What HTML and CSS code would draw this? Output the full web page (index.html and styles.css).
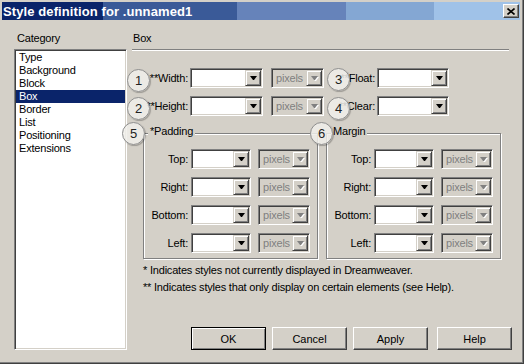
FILE: index.html
```html
<!DOCTYPE html>
<html lang="en">
<head>
    <meta charset="UTF-8">
    <title>Style definition for .unnamed1</title>
    <link rel="stylesheet" href="styles.css">
</head>
<body>
    <div class="window">
        <div class="titlebar">
            <span class="title">Style definition for .unnamed1</span>
            <span class="close">
                <svg width="8" height="7" viewBox="0 0 8 7"><path d="M0.5 0.5 L7.5 6.5 M7.5 0.5 L0.5 6.5" stroke="#000" stroke-width="1.6" fill="none"/></svg>
            </span>
        </div>
        <div class="dialog">
            <div class="cat-col">
                <div class="label cat-label">Category</div>
                <ul class="listbox">
                    <li>Type</li>
                    <li>Background</li>
                    <li>Block</li>
                    <li class="selected">Box</li>
                    <li>Border</li>
                    <li>List</li>
                    <li>Positioning</li>
                    <li>Extensions</li>
                </ul>
            </div>
            <div class="main-col">
                <div class="label box-label">Box</div>
                <div class="separator"></div>
                <div class="size-rows">
                    <div class="form-row">
                        <span class="field-label lbl-size">**Width:</span>
                        <span class="combo w73"><span class="combo-field"></span><span class="combo-btn"></span></span>
                        <span class="combo unit off"><span class="combo-field">pixels</span><span class="combo-btn"></span></span>
                        <span class="field-label lbl-side">**Float:</span>
                        <span class="combo w72"><span class="combo-field"></span><span class="combo-btn"></span></span>
                    </div>
                    <div class="form-row">
                        <span class="field-label lbl-size">**Height:</span>
                        <span class="combo w73"><span class="combo-field"></span><span class="combo-btn"></span></span>
                        <span class="combo unit off"><span class="combo-field">pixels</span><span class="combo-btn"></span></span>
                        <span class="field-label lbl-side">**Clear:</span>
                        <span class="combo w72"><span class="combo-field"></span><span class="combo-btn"></span></span>
                    </div>
                </div>
                <div class="groups">
                    <div class="group">
                        <div class="group-title">*Padding</div>
                        <div class="group-rows">
                            <div class="form-row">
                                <span class="field-label lbl-side-box">Top:</span>
                                <span class="combo w60"><span class="combo-field"></span><span class="combo-btn"></span></span>
                                <span class="combo unit off"><span class="combo-field">pixels</span><span class="combo-btn"></span></span>
                            </div>
                            <div class="form-row">
                                <span class="field-label lbl-side-box">Right:</span>
                                <span class="combo w60"><span class="combo-field"></span><span class="combo-btn"></span></span>
                                <span class="combo unit off"><span class="combo-field">pixels</span><span class="combo-btn"></span></span>
                            </div>
                            <div class="form-row">
                                <span class="field-label lbl-side-box">Bottom:</span>
                                <span class="combo w60"><span class="combo-field"></span><span class="combo-btn"></span></span>
                                <span class="combo unit off"><span class="combo-field">pixels</span><span class="combo-btn"></span></span>
                            </div>
                            <div class="form-row">
                                <span class="field-label lbl-side-box">Left:</span>
                                <span class="combo w60"><span class="combo-field"></span><span class="combo-btn"></span></span>
                                <span class="combo unit off"><span class="combo-field">pixels</span><span class="combo-btn"></span></span>
                            </div>
                        </div>
                    </div>
                    <div class="group">
                        <div class="group-title">Margin</div>
                        <div class="group-rows">
                            <div class="form-row">
                                <span class="field-label lbl-side-box">Top:</span>
                                <span class="combo w60"><span class="combo-field"></span><span class="combo-btn"></span></span>
                                <span class="combo unit off"><span class="combo-field">pixels</span><span class="combo-btn"></span></span>
                            </div>
                            <div class="form-row">
                                <span class="field-label lbl-side-box">Right:</span>
                                <span class="combo w60"><span class="combo-field"></span><span class="combo-btn"></span></span>
                                <span class="combo unit off"><span class="combo-field">pixels</span><span class="combo-btn"></span></span>
                            </div>
                            <div class="form-row">
                                <span class="field-label lbl-side-box">Bottom:</span>
                                <span class="combo w60"><span class="combo-field"></span><span class="combo-btn"></span></span>
                                <span class="combo unit off"><span class="combo-field">pixels</span><span class="combo-btn"></span></span>
                            </div>
                            <div class="form-row">
                                <span class="field-label lbl-side-box">Left:</span>
                                <span class="combo w60"><span class="combo-field"></span><span class="combo-btn"></span></span>
                                <span class="combo unit off"><span class="combo-field">pixels</span><span class="combo-btn"></span></span>
                            </div>
                        </div>
                    </div>
                </div>
                <div class="notes">
                    <p>* Indicates styles not currently displayed in Dreamweaver.</p>
                    <p>** Indicates styles that only display on certain elements (see Help).</p>
                </div>
                <div class="buttons">
                    <button class="btn btn-default">OK</button>
                    <button class="btn">Cancel</button>
                    <button class="btn">Apply</button>
                    <button class="btn btn-help">Help</button>
                </div>
            </div>
        </div>
        <span class="mark mark-1">1</span>
        <span class="mark mark-2">2</span>
        <span class="mark mark-3">3</span>
        <span class="mark mark-4">4</span>
        <span class="mark mark-5">5</span>
        <span class="mark mark-6">6</span>
    </div>
</body>
</html>
```

FILE: styles.css
```css
body {
    margin: 0;
    background: #d4d0c8;
    font-family: 'Liberation Sans', Arial, sans-serif;
    font-size: 11px;
    letter-spacing: -0.2px;
    color: #000;
}
.window {
    position: relative;
    width: 524px;
    height: 364px;
    box-sizing: border-box;
    padding: 2px 4px 2px 2px;
    background: #d4d0c8;
    display: flex;
    flex-direction: column;
    box-shadow: inset -1px -1px #404040, inset -2px -2px #808080;
}
.titlebar {
    height: 18px;
    flex-shrink: 0;
    display: flex;
    align-items: center;
    justify-content: space-between;
    padding: 0 1px;
    background: linear-gradient(to right,
        #0a246a 0, #0a246a 101px,
        #3a5a98 101px, #3a5a98 235px,
        #6683ba 235px, #6683ba 344px,
        #84a7d3 344px, #84a7d3 432px,
        #a0c2e8 432px);
}
.title {
    color: #fff;
    font-weight: bold;
    font-size: 13px;
    letter-spacing: 0.1px;
    white-space: nowrap;
}
.close {
    width: 16px;
    height: 14px;
    box-sizing: border-box;
    background: #d4d0c8;
    border: 1px solid;
    border-color: #fff #404040 #404040 #fff;
    box-shadow: inset -1px -1px #808080;
    display: flex;
    align-items: center;
    justify-content: center;
}
.close svg {
    display: block;
}
.dialog {
    flex: 1;
    min-height: 0;
    display: flex;
    gap: 5px;
    padding: 12px 8px 12px 12px;
}
.label {
    line-height: 13px;
}
.cat-col {
    width: 113px;
    display: flex;
    flex-direction: column;
}
.cat-label {
    padding-left: 3px;
    margin-bottom: 4px;
}
.listbox {
    flex: 1;
    margin: 0;
    padding: 1px;
    list-style: none;
    background: #fff;
    border: 1px solid;
    border-color: #808080 #fff #fff #808080;
    box-shadow: inset 1px 1px #404040, inset -1px -1px #d4d0c8;
}
.listbox li {
    line-height: 13px;
    padding-left: 3px;
    white-space: nowrap;
}
.listbox li.selected {
    background: #0a246a;
    color: #fff;
}
.main-col {
    flex: 1;
    min-width: 0;
    display: flex;
    flex-direction: column;
}
.box-label {
    padding-left: 1px;
    margin-bottom: 4px;
}
.separator {
    border-top: 1px solid #808080;
    border-bottom: 1px solid #fff;
    margin-right: 3px;
}
.size-rows {
    margin-top: 17px;
    display: flex;
    flex-direction: column;
    gap: 8px;
}
.form-row {
    display: flex;
    align-items: center;
    height: 20px;
}
.field-label {
    line-height: 20px;
    text-align: right;
    white-space: nowrap;
    margin-right: 2px;
    flex-shrink: 0;
}
.lbl-size {
    width: 56px;
}
.lbl-side {
    width: 51px;
}
.lbl-side-box {
    width: 44px;
    margin-right: 3px;
}
.combo {
    height: 20px;
    box-sizing: border-box;
    flex-shrink: 0;
    display: flex;
    padding: 1px;
    background: #fff;
    border: 1px solid;
    border-color: #808080 #fff #fff #808080;
    box-shadow: inset 1px 1px #404040, inset -1px -1px #d4d0c8;
}
.combo-field {
    flex: 1;
    line-height: 16px;
    padding-left: 3px;
    overflow: hidden;
}
.combo-btn {
    width: 16px;
    height: 16px;
    box-sizing: border-box;
    background: #d4d0c8;
    border: 1px solid;
    border-color: #d4d0c8 #404040 #404040 #d4d0c8;
    box-shadow: inset 1px 1px #fff, inset -1px -1px #808080;
    display: flex;
    align-items: center;
    justify-content: center;
}
.combo-btn::after {
    content: '';
    width: 1px;
    height: 0;
    border-top: 4px solid #000;
    border-left: 3px solid transparent;
    border-right: 3px solid transparent;
}
.combo.off {
    background: #d4d0c8;
}
.combo.off .combo-field {
    color: #808080;
}
.combo.off .combo-btn::after {
    border-top-color: #808080;
    filter: drop-shadow(1px 1px 0 #fff);
}
.w73 {
    width: 73px;
}
.w72 {
    width: 72px;
}
.w60 {
    width: 60px;
}
.unit {
    width: 53px;
    margin-left: 8px;
}
.group .unit {
    width: 52px;
    margin-left: 7px;
}
.groups {
    margin: 17px 0 0 11px;
    display: flex;
    gap: 8px;
}
.group {
    width: 175px;
    box-sizing: border-box;
    border: 1px solid #808080;
    box-shadow: 1px 1px 0 #fff, inset 1px 1px 0 #fff;
    padding-bottom: 5px;
}
.group-title {
    width: max-content;
    margin: -9px 0 0 4px;
    padding: 0 2px;
    background: #d4d0c8;
    line-height: 13px;
}
.group-rows {
    margin-top: 11px;
    display: flex;
    flex-direction: column;
    gap: 8px;
}
.notes {
    margin: 3px 0 0 11px;
    line-height: 17px;
}
.notes p {
    margin: 0;
}
.buttons {
    margin-top: auto;
    display: flex;
    justify-content: flex-end;
    gap: 6px;
}
.btn {
    width: 75px;
    height: 23px;
    box-sizing: border-box;
    padding: 0;
    font: inherit;
    color: #000;
    background: #d4d0c8;
    border: 1px solid;
    border-color: #fff #404040 #404040 #fff;
    box-shadow: inset -1px -1px #808080;
}
.btn-default {
    border-color: #000;
    box-shadow: inset 1px 1px #fff, inset -1px -1px #808080;
}
.btn-help {
    margin-left: 3px;
}
.mark {
    position: absolute;
    width: 23px;
    height: 23px;
    box-sizing: border-box;
    border-radius: 50%;
    border: 1.5px solid #8e8e8e;
    background: rgba(240, 238, 234, 0.85);
    box-shadow: 1px 1px 1px rgba(0, 0, 0, 0.25);
    display: flex;
    align-items: center;
    justify-content: center;
    font-size: 13px;
    letter-spacing: 0;
    color: #222;
}
.mark-1 { left: 127px; top: 69px; }
.mark-2 { left: 127px; top: 97px; }
.mark-3 { left: 327px; top: 68px; }
.mark-4 { left: 327px; top: 97px; }
.mark-5 { left: 122px; top: 122px; }
.mark-6 { left: 310px; top: 122px; }
```
